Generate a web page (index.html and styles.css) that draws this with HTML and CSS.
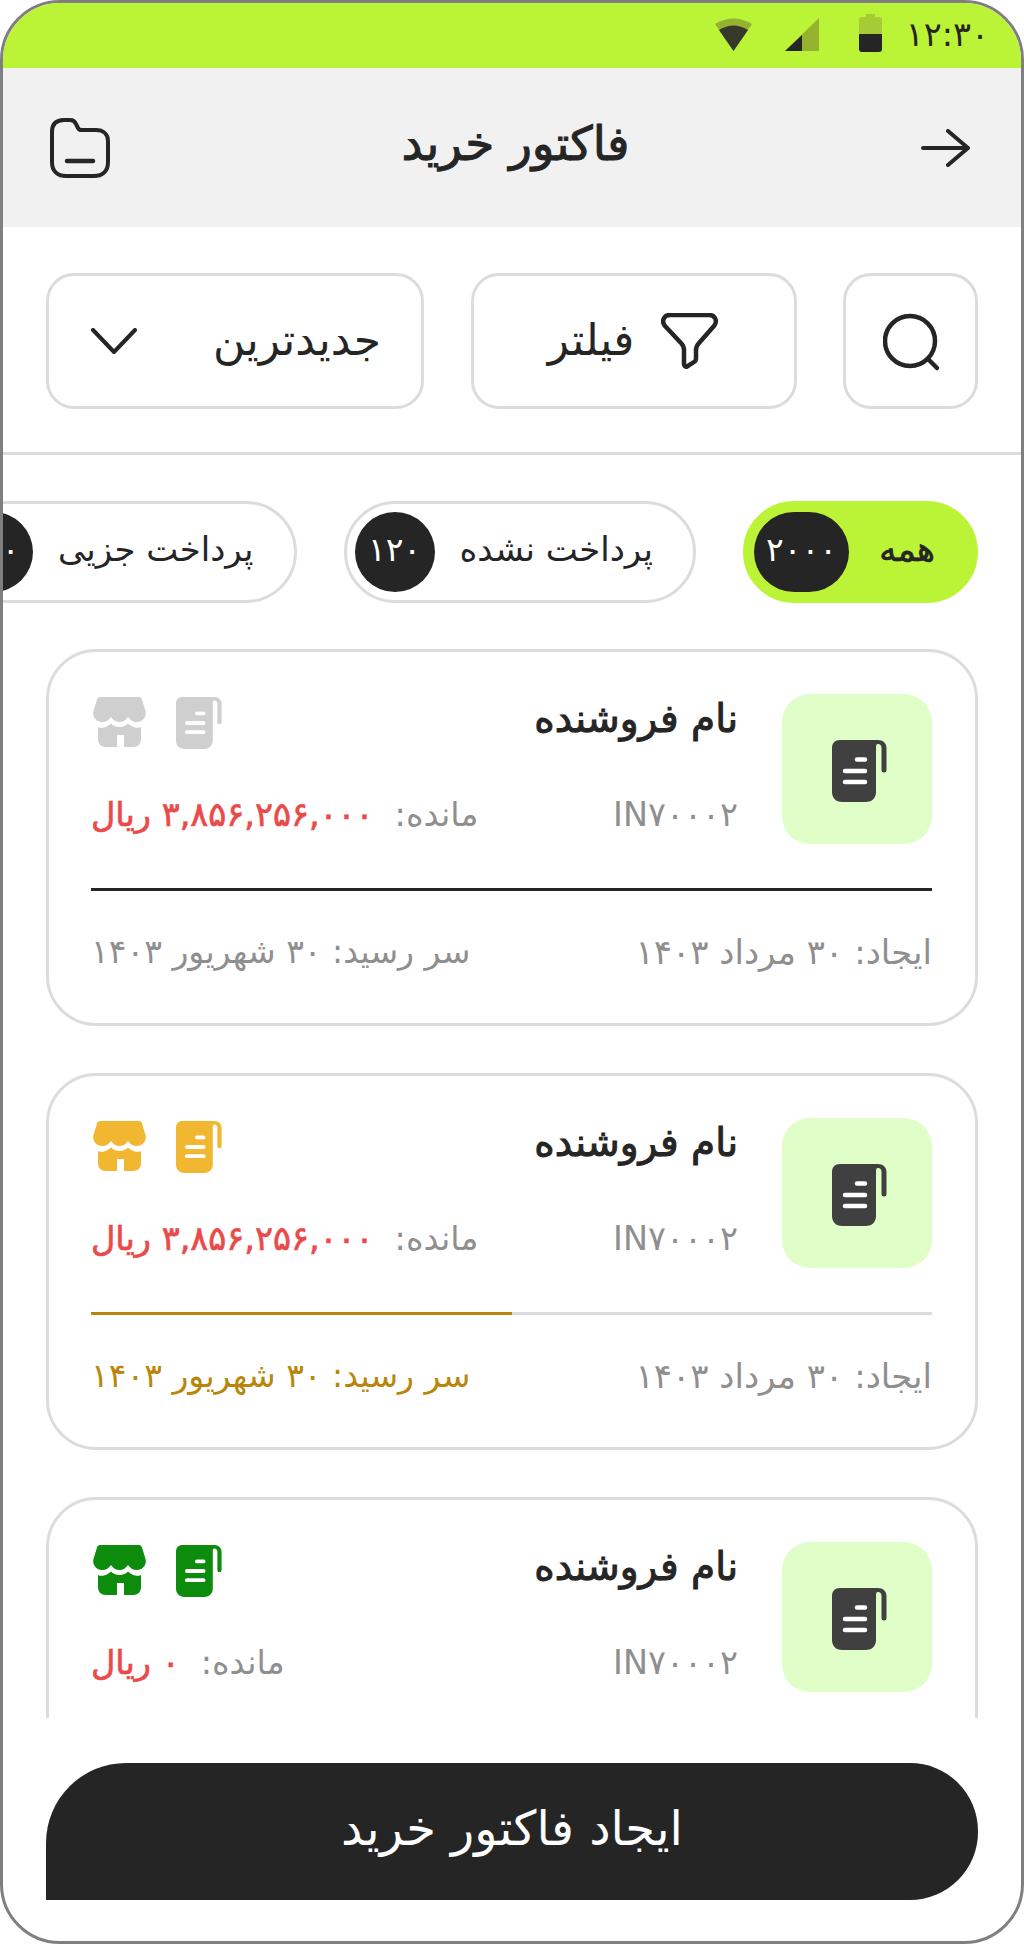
FILE: index.html
```html
<!DOCTYPE html>
<html lang="fa" dir="rtl">
<head>
<meta charset="utf-8">
<title>فاکتور خرید</title>
<link rel="stylesheet" href="styles.css">
</head>
<body>
<svg class="defs" width="0" height="0" aria-hidden="true">
  <symbol id="doc" viewBox="0 0 55 62">
    <path fill="currentColor" d="M8 0H46C51 0 54.500 3.500 54.500 8V30A2.500 2.500 0 0 1 49.500 30V8C49.500 5.500 48 4 46 4C44 4 44 6 44 8V52C44 58 40 62 34 62H10C4 62 0 58 0 52V8C0 3 3 0 8 0Z"/>
    <g stroke="var(--lines,#fff)" stroke-width="4.500" stroke-linecap="round">
      <path d="M25 19.500H33"/><path d="M13 31H33"/><path d="M13 42H33"/>
    </g>
  </symbol>
  <symbol id="store" viewBox="0 0 53 50">
    <path fill="currentColor" d="M7 0H46C47.500 0 48.500 1 49 2.500L52.500 14C54 19.500 50 25 44 25C40 25 37 23 35 20C33 23 30 25 26.500 25C23 25 20 23 18 20C16 23 13 25 9 25C3 25 -1 19.500 .5 14L4 2.500C4.500 1 5.500 0 7 0Z"/>
    <path fill="currentColor" d="M5 30C7 31 9 31 11 30.500C13.500 30 15.500 28.500 18 26.500C20 28.500 23 30 26.500 30C30 30 33 28.500 35 26.500C37.500 28.500 39.500 30 42 30.500C44 31 46 31 48 30V42C48 47 45 50 40 50H31V38H24V50H13C8 50 5 47 5 42Z"/>
  </symbol>
</svg>

<main class="phone">
  <div class="status">
    <svg class="st-wifi" width="37" height="33" viewBox="0 0 37 33" aria-hidden="true">
      <path fill="#95b32f" d="M0 6Q18.500 -5 37 6L18.500 33Z"/>
      <path fill="#35382a" d="M4 12Q18.500 3 33 12L18.500 33Z"/>
    </svg>
    <svg class="st-signal" width="34" height="33" viewBox="0 0 34 33" aria-hidden="true">
      <path fill="#95b32f" d="M34 0V33H0Z"/>
      <path fill="#252525" d="M17 17V33H0Z"/>
    </svg>
    <svg class="st-battery" width="23" height="38" viewBox="0 0 23 38" aria-hidden="true">
      <path fill="#a5cc34" d="M7 0H16V3H20Q23 3 23 6V20H0V6Q0 3 3 3H7Z"/>
      <path fill="#252525" d="M0 20H23V35Q23 38 20 38H3Q0 38 0 35Z"/>
    </svg>
    <span class="st-time">۱۲:۳۰</span>
  </div>

  <header class="topbar">
    <svg width="49" height="38" viewBox="0 0 49 38" aria-hidden="true">
      <path fill="none" stroke="#252525" stroke-width="4" stroke-linecap="round" stroke-linejoin="round" d="M2 19H46M27 2L47 19L27 36"/>
    </svg>
    <h1 class="title">فاکتور خرید</h1>
    <svg width="60" height="60" viewBox="0 0 60 60" aria-hidden="true">
      <path fill="none" stroke="#252525" stroke-width="4" stroke-linecap="round" stroke-linejoin="round" d="M14 2H20C23 2 25 3.500 26 6L28 10C29 12 30 12 33 12H46C53 12 58 16 58 23V44C58 53 53 58 44 58H16C7 58 2 53 2 44V14C2 6 6 2 14 2Z"/>
      <path fill="none" stroke="#252525" stroke-width="4.500" stroke-linecap="round" d="M17 43H43"/>
    </svg>
  </header>

  <section class="tools">
    <button class="tool tool-search" type="button" aria-label="جستجو">
      <svg width="56" height="60" viewBox="0 0 56 60" aria-hidden="true">
        <circle cx="27" cy="30" r="25" fill="none" stroke="#252525" stroke-width="4.500"/>
        <path stroke="#252525" stroke-width="4.500" stroke-linecap="round" d="M46 49L54 57"/>
      </svg>
    </button>
    <button class="tool tool-filter" type="button">
      <svg width="58" height="56" viewBox="0 0 58 56" aria-hidden="true">
        <path fill="none" stroke="#252525" stroke-width="4.500" stroke-linejoin="round" d="M9 2H48C54 2 57 8 53 13L38 30C36 32 35 34 35 37V46C35 47.500 34.500 48 33 49L26 53.500C24.500 54 23 53 23 51V37C23 34 22 32 20 30L4 13C0 8 3 2 9 2Z"/>
      </svg>
      <span>فیلتر</span>
    </button>
    <button class="tool tool-sort" type="button">
      <span>جدیدترین</span>
      <svg width="46" height="26" viewBox="0 0 46 26" aria-hidden="true">
        <path fill="none" stroke="#252525" stroke-width="4" stroke-linecap="round" stroke-linejoin="round" d="M2 2L23 24L44 2"/>
      </svg>
    </button>
  </section>

  <nav class="tabs">
    <div class="tab tab-on"><span class="tab-label">همه</span><span class="count">۲۰۰۰</span></div>
    <div class="tab"><span class="tab-label">پرداخت نشده</span><span class="count">۱۲۰</span></div>
    <div class="tab"><span class="tab-label">پرداخت جزیی</span><span class="count">۱۲۰</span></div>
  </nav>

  <section class="list">
    <article class="card is-gray">
      <div class="card-top">
        <div class="tile"><svg class="tile-icon"><use href="#doc"/></svg></div>
        <div class="card-body">
          <div class="row">
            <h2 class="vendor">نام فروشنده</h2>
            <div class="badges"><svg class="b-doc"><use href="#doc"/></svg><svg class="b-store"><use href="#store"/></svg></div>
          </div>
          <div class="row">
            <span class="code">IN۷۰۰۰۲</span>
            <span class="due"><span class="due-label">مانده:</span><b class="due-value">۳,۸۵۶,۲۵۶,۰۰۰ ریال</b></span>
          </div>
        </div>
      </div>
      <div class="bar bar-dark"></div>
      <div class="row foot">
        <span>ایجاد: ۳۰ مرداد ۱۴۰۳</span>
        <span class="foot-due">سر رسید: ۳۰ شهریور ۱۴۰۳</span>
      </div>
    </article>

    <article class="card is-amber">
      <div class="card-top">
        <div class="tile"><svg class="tile-icon"><use href="#doc"/></svg></div>
        <div class="card-body">
          <div class="row">
            <h2 class="vendor">نام فروشنده</h2>
            <div class="badges"><svg class="b-doc"><use href="#doc"/></svg><svg class="b-store"><use href="#store"/></svg></div>
          </div>
          <div class="row">
            <span class="code">IN۷۰۰۰۲</span>
            <span class="due"><span class="due-label">مانده:</span><b class="due-value">۳,۸۵۶,۲۵۶,۰۰۰ ریال</b></span>
          </div>
        </div>
      </div>
      <div class="bar bar-part"><i class="bar-fill"></i></div>
      <div class="row foot">
        <span>ایجاد: ۳۰ مرداد ۱۴۰۳</span>
        <span class="foot-due foot-warn">سر رسید: ۳۰ شهریور ۱۴۰۳</span>
      </div>
    </article>

    <article class="card is-green">
      <div class="card-top">
        <div class="tile"><svg class="tile-icon"><use href="#doc"/></svg></div>
        <div class="card-body">
          <div class="row">
            <h2 class="vendor">نام فروشنده</h2>
            <div class="badges"><svg class="b-doc"><use href="#doc"/></svg><svg class="b-store"><use href="#store"/></svg></div>
          </div>
          <div class="row">
            <span class="code">IN۷۰۰۰۲</span>
            <span class="due"><span class="due-label">مانده:</span><b class="due-value">۰ ریال</b></span>
          </div>
        </div>
      </div>
    </article>
  </section>

  <div class="cta-wrap"><button class="cta" type="button">ایجاد فاکتور خرید</button></div>
</main>
</body>
</html>
```
FILE: styles.css
```css
* { box-sizing: border-box; margin: 0; padding: 0; }
html, body { background: #fff; }
body {
  font-family: "DejaVu Sans", "Noto Sans", sans-serif;
  color: #252525;
  width: 1024px;
  height: 1944px;
  overflow: hidden;
}
.defs { position: absolute; }
.phone {
  width: 1024px;
  height: 1944px;
  border: 3px solid #7f7f7f;
  border-radius: 60px;
  overflow: hidden;
  background: #fff;
  display: flex;
  flex-direction: column;
}
.status {
  direction: ltr;
  height: 65px;
  flex: none;
  background: #bbf336;
  display: flex;
  align-items: center;
  justify-content: flex-end;
  padding: 0 32px 2px 0;
}
.st-time { font-size: 33.5px; line-height: 40px; }
.st-wifi { margin-right: 33px; }
.st-signal { margin-right: 40px; }
.st-battery { margin-right: 24px; margin-top: -3px; }
.topbar {
  height: 159px;
  flex: none;
  background: #f1f1f1;
  display: flex;
  align-items: center;
  justify-content: space-between;
  padding: 0 51px 0 47px;
}
.title { font-size: 47px; font-weight: 400; -webkit-text-stroke: 1px #252525; margin-top: -8px; }
.tools {
  flex: none;
  display: flex;
  gap: 46.500px;
  padding: 46px 43px 45px 43px;
  border-bottom: 3px solid #dcdcdc;
  height: 228px;
}
.tool {
  flex: none;
  height: 136px;
  background: #fff;
  border: 3px solid #dcdcdc;
  border-radius: 28px;
  font: inherit;
  font-size: 44px;
  color: #252525;
  display: flex;
  align-items: center;
}
.tool span { margin-top: -4px; }
.tool-search { width: 135px; justify-content: center; }
.tool-filter { width: 326px; justify-content: center; gap: 27px; }
.tool-sort { width: 378px; justify-content: space-between; padding: 0 40px 0 42px; }
.tabs {
  flex: none;
  display: flex;
  gap: 47px;
  padding: 46px 43px 46px 0;
  overflow: hidden;
}
.tab {
  flex: none;
  height: 102px;
  border: 3px solid #dcdcdc;
  border-radius: 51px;
  display: flex;
  align-items: center;
  justify-content: space-between;
  padding: 0 40px 0 8px;
  gap: 25px;
  font-size: 34px;
}
.tab-label { margin-top: -6px; }
.tab-on { background: #bbf336; border-color: #bbf336; width: 235px; }
.tab-on .tab-label { -webkit-text-stroke: .7px #252525; }
.count {
  height: 80px;
  min-width: 80px;
  padding: 0 12px 6px;
  border-radius: 40px;
  background: #252525;
  color: #fff;
  display: flex;
  align-items: center;
  justify-content: center;
  font-size: 33px;
}
.list {
  flex: none;
  height: 1069px;
  overflow: hidden;
  padding: 0 43px;
  display: flex;
  flex-direction: column;
  gap: 47px;
}
.card {
  flex: none;
  height: 377px;
  border: 3px solid #dcdcdc;
  border-radius: 50px;
  padding: 42px 43px 42px 42px;
}
.card-top { display: flex; gap: 44px; height: 150px; }
.tile {
  flex: none;
  width: 150px;
  height: 150px;
  padding: 4px 0 0 5px;
  border-radius: 28px;
  background: #e0ffc8;
  display: flex;
  align-items: center;
  justify-content: center;
  color: #404040;
}
.tile-icon { width: 55px; height: 62px; }
.card-body { flex: 1; display: flex; flex-direction: column; justify-content: space-between; }
.row { display: flex; justify-content: space-between; align-items: flex-start; }
.vendor { font-size: 39px; font-weight: 400; -webkit-text-stroke: 1px #252525; line-height: 50px; }
.badges { display: flex; gap: 30px; margin: 3px 0 0 2px; }
.b-doc { width: 46px; height: 52px; }
.b-store { width: 53px; height: 50px; }
.is-gray .badges { color: #cfcfcf; }
.is-amber .badges { color: #f2b731; }
.is-green .badges { color: #0c8b0c; }
.code { font-size: 33.5px; color: #8f8f8f; line-height: 46px; margin-bottom: 6px; }
.due { display: flex; gap: 21px; align-items: center; line-height: 46px; font-size: 33.5px; margin-bottom: 6px; }
.due-label { color: #8f8f8f; }
.due-value { color: #e94b4b; font-weight: 400; font-size: 33.5px; -webkit-text-stroke: .7px #e94b4b; }
.bar { height: 3px; margin-top: 44px; background: #dcdcdc; display: flex; }
.bar-dark { background: #252525; }
.bar-fill { display: block; width: 50%; margin-right: auto; background: #b8860b; }
.foot { margin-top: 38px; font-size: 34px; color: #8f8f8f; line-height: 46px; }
.foot-due { font-size: 33px; }
.foot-warn { color: #b8860b; }
.cta-wrap { flex: none; padding: 45px 43px 0; }
.cta {
  width: 100%;
  height: 137px;
  border: 0;
  background: #252525;
  color: #fff;
  font: inherit;
  font-size: 48px;
  padding-bottom: 8px;
  border-radius: 80px 68px 68px 0;
}
```
